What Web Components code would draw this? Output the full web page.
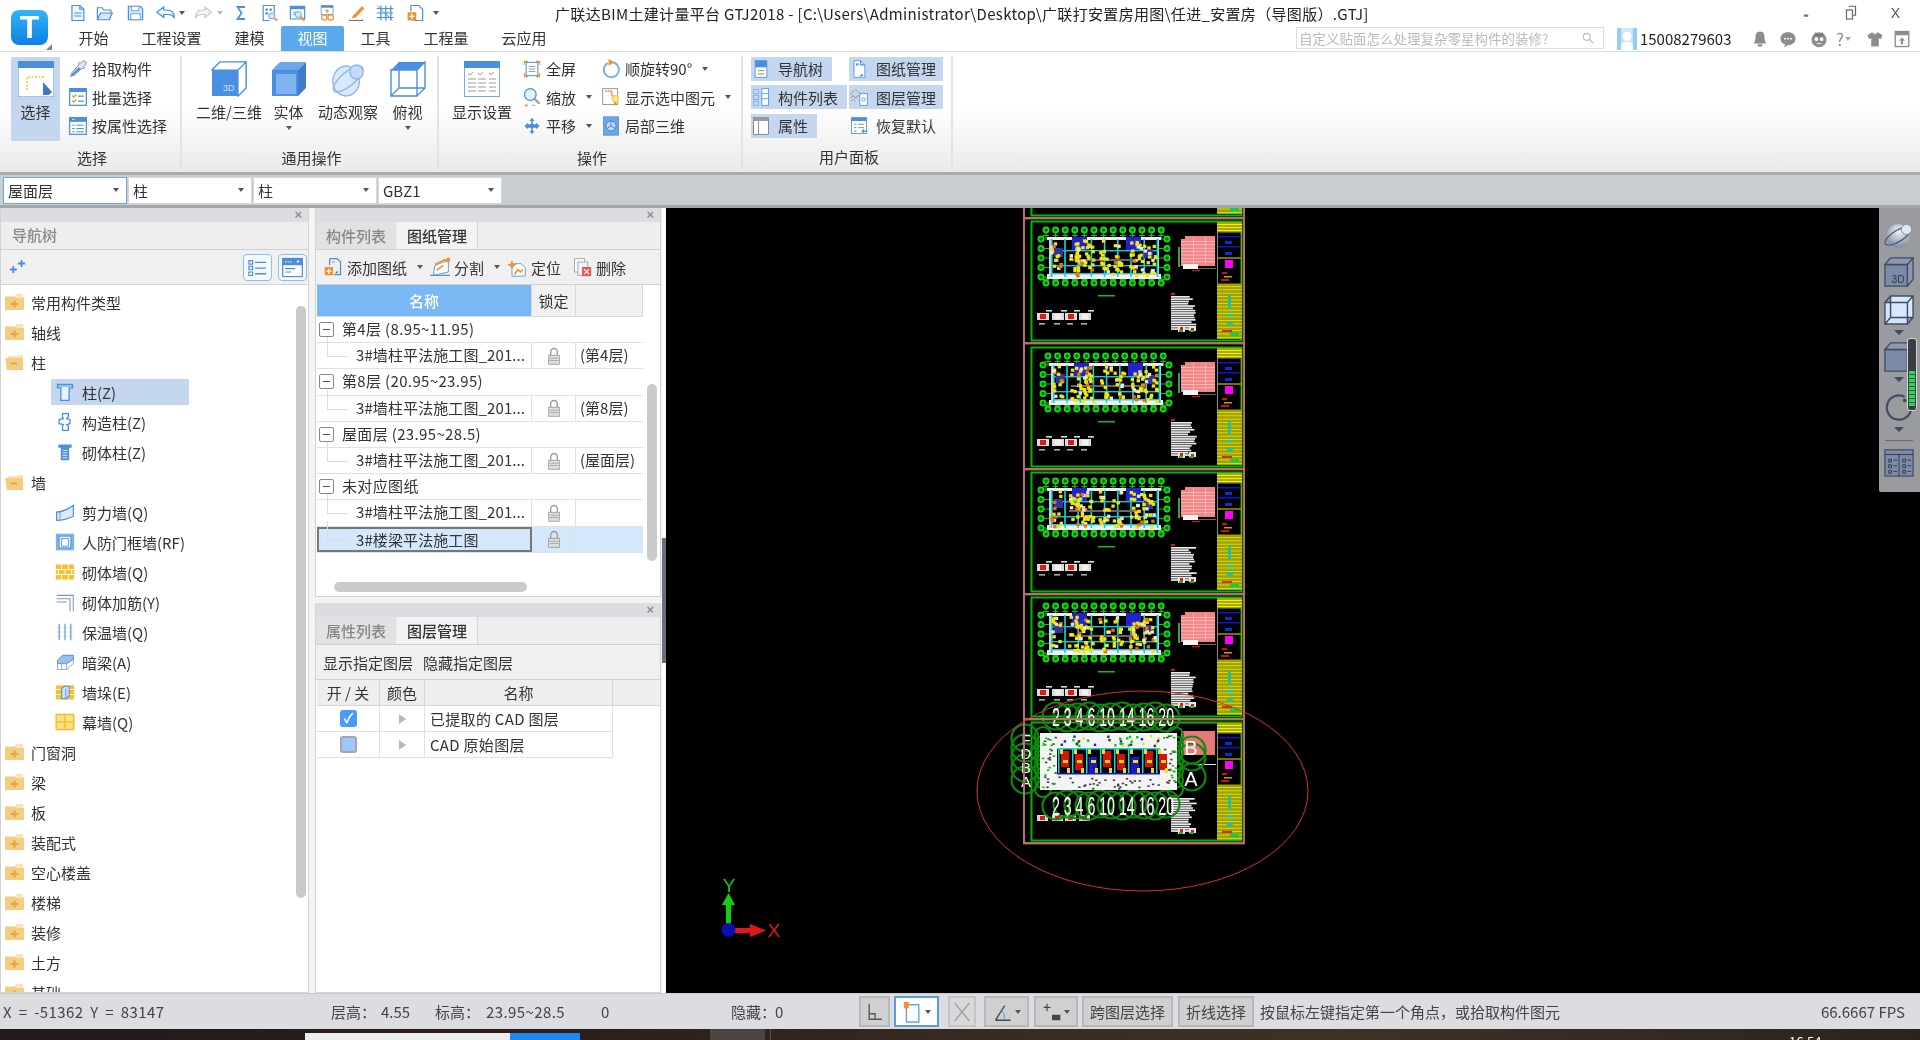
<!DOCTYPE html>
<html lang="zh-CN">
<head>
<meta charset="utf-8">
<title>GTJ2018</title>
<style>
  html, body { margin: 0; height: 100%; overflow: hidden; background: #fff; }
  body { font: 15px "Noto Sans CJK SC", "Liberation Sans", sans-serif; color: #333; }
</style>
</head>
<body>
<gtj-app>
  <title-bar></title-bar>

  <ribbon-bar>
    <ribbon-group label="选择" w="182" pad="11">
      <big-btn icon="select" on w="49">选择</big-btn>
      <btn-stack style="margin-left:8px">
        <small-btn icon="pick">拾取构件</small-btn>
        <small-btn icon="batch">批量选择</small-btn>
        <small-btn icon="byprop">按属性选择</small-btn>
      </btn-stack>
    </ribbon-group>
    <ribbon-group label="通用操作" w="257" pad="17">
      <big-btn icon="box3d">二维/三维</big-btn>
      <big-btn icon="solid" caret>实体</big-btn>
      <big-btn icon="orbit">动态观察</big-btn>
      <big-btn icon="topview" caret>俯视</big-btn>
    </ribbon-group>
    <ribbon-group label="操作" w="304" pad="13">
      <big-btn icon="display">显示设置</big-btn>
      <btn-stack style="margin-left:10px;width:79px">
        <small-btn icon="full">全屏</small-btn>
        <small-btn icon="zoom" caret>缩放</small-btn>
        <small-btn icon="pan" caret>平移</small-btn>
      </btn-stack>
      <btn-stack>
        <small-btn icon="rotate" caret>顺旋转90°</small-btn>
        <small-btn icon="showsel" caret>显示选中图元</small-btn>
        <small-btn icon="local3d">局部三维</small-btn>
      </btn-stack>
    </ribbon-group>
    <ribbon-group label="用户面板" w="210" pad="8" last>
      <btn-stack style="width:98px">
        <small-btn icon="navtree" on w="81" style="gap:7px">导航树</small-btn>
        <small-btn icon="complist" on w="96" style="gap:7px">构件列表</small-btn>
        <small-btn icon="props" on w="66" style="gap:7px">属性</small-btn>
      </btn-stack>
      <btn-stack>
        <small-btn icon="drawing" on w="94" style="gap:7px">图纸管理</small-btn>
        <small-btn icon="layers" on w="94" style="gap:7px">图层管理</small-btn>
        <small-btn icon="restore" w="94" style="gap:7px">恢复默认</small-btn>
      </btn-stack>
    </ribbon-group>
  </ribbon-bar>

  <combo-bar>
    <combo-box focus>屋面层</combo-box>
    <combo-box>柱</combo-box>
    <combo-box>柱</combo-box>
    <combo-box>GBZ1</combo-box>
  </combo-bar>

  <main-area>
    <dock-panel title-text="导航树" slot="left">
      <nav-tools></nav-tools>
      <nav-tree>
        <tree-row kind="closed">常用构件类型</tree-row>
        <tree-row kind="closed">轴线</tree-row>
        <tree-row kind="open">柱</tree-row>
        <tree-row icon="col" selected>柱(Z)</tree-row>
        <tree-row icon="gzz">构造柱(Z)</tree-row>
        <tree-row icon="qtz">砌体柱(Z)</tree-row>
        <tree-row kind="open">墙</tree-row>
        <tree-row icon="shear">剪力墙(Q)</tree-row>
        <tree-row icon="rf">人防门框墙(RF)</tree-row>
        <tree-row icon="brick">砌体墙(Q)</tree-row>
        <tree-row icon="rebar">砌体加筋(Y)</tree-row>
        <tree-row icon="insul">保温墙(Q)</tree-row>
        <tree-row icon="beam">暗梁(A)</tree-row>
        <tree-row icon="pier">墙垛(E)</tree-row>
        <tree-row icon="curtain">幕墙(Q)</tree-row>
        <tree-row kind="closed">门窗洞</tree-row>
        <tree-row kind="closed">梁</tree-row>
        <tree-row kind="closed">板</tree-row>
        <tree-row kind="closed">装配式</tree-row>
        <tree-row kind="closed">空心楼盖</tree-row>
        <tree-row kind="closed">楼梯</tree-row>
        <tree-row kind="closed">装修</tree-row>
        <tree-row kind="closed">土方</tree-row>
        <tree-row kind="closed">基础</tree-row>
      </nav-tree>
    </dock-panel>

    <dock-panel tabs="构件列表,图纸管理" slot="mid1">
      <panel-tools>
        <small-btn icon="addpaper" caret style="gap:4px">添加图纸</small-btn>
        <small-btn icon="split" caret style="margin-left:7px">分割</small-btn>
        <small-btn icon="locate" style="margin-left:7px">定位</small-btn>
        <small-btn icon="del" style="margin-left:11px">删除</small-btn>
      </panel-tools>
      <drawing-list>
        <drawing-row kind="group">第4层 (8.95~11.95)</drawing-row>
        <drawing-row tag="(第4层)">3#墙柱平法施工图_201...</drawing-row>
        <drawing-row kind="group">第8层 (20.95~23.95)</drawing-row>
        <drawing-row tag="(第8层)">3#墙柱平法施工图_201...</drawing-row>
        <drawing-row kind="group">屋面层 (23.95~28.5)</drawing-row>
        <drawing-row tag="(屋面层)">3#墙柱平法施工图_201...</drawing-row>
        <drawing-row kind="group">未对应图纸</drawing-row>
        <drawing-row>3#墙柱平法施工图_201...</drawing-row>
        <drawing-row selected>3#楼梁平法施工图</drawing-row>
      </drawing-list>
    </dock-panel>

    <dock-panel tabs="属性列表,图层管理" slot="mid2">
      <panel-tools>
        <span>显示指定图层</span><span style="margin-left:10px">隐藏指定图层</span>
      </panel-tools>
      <layer-table>
        <layer-row checked>已提取的 CAD 图层</layer-row>
        <layer-row>CAD 原始图层</layer-row>
      </layer-table>
    </dock-panel>

    <cad-canvas slot="canvas"><view-toolbox></view-toolbox></cad-canvas>
  </main-area>

  <status-bar></status-bar>
  <task-bar></task-bar>
</gtj-app>

<script>
const B = '#4a8fdc', L = '#d6e7fb', O = '#f0922c', Y = '#fbc02d';
const line = `fill="none" stroke="${B}" stroke-width="1.5"`;

// viewBox is 24x24 unless the entry starts with its own viewBox
const ICONS = {
  'new': `<path d="M5 2h10l5 5v15H5z" fill="#eef5fd" stroke="${B}" stroke-width="1.5"/><path d="M15 2v5h5M8 12h9M8 16h9" ${line}/>`,
  open: `<path d="M3 21V5h6l2 3h9v4" ${line}/><path d="M3 21l4-9h15l-4 9z" fill="${L}" stroke="${B}" stroke-width="1.5"/>`,
  save: `<path d="M3 3h15l3 3v15H3z" fill="${L}" stroke="${B}" stroke-width="1.5"/><path d="M7 3h9v6H7z" fill="#fff" stroke="${B}"/><path d="M6 13h12v8H6z" fill="#fff" stroke="${B}"/>`,
  undo: `<path d="M10 4L2 11l8 7v-4h5c3 0 5 1 7 4 0-6-3-10-9-10h-3z" fill="#f3f8fe" stroke="${B}" stroke-width="1.5"/>`,
  redo: `<path d="M14 4l8 7-8 7v-4H9c-3 0-5 1-7 4 0-6 3-10 9-10h3z" fill="#f6f6f6" stroke="#c4c8cc" stroke-width="1.5"/>`,
  sigma: `<path d="M19 4H6l7 8-7 8h13" fill="none" stroke="${B}" stroke-width="2.6"/>`,
  qa1: `<path d="M4 2v20h8" ${line}/><path d="M4 2h14v10" ${line}/><path d="M7 6h3v3H7zM12 6h3v3h-3zM7 11h3v3H7z" fill="${B}"/><circle cx="15" cy="16" r="4" fill="${L}" stroke="${B}"/><path d="M18 19l4 3" stroke="${O}" stroke-width="2.5"/>`,
  qa2: `<path d="M3 3h18v17H3z" fill="#fff" stroke="${B}" stroke-width="1.5"/><path d="M3 3h18v4H3z" fill="${B}"/><circle cx="13" cy="14" r="4" fill="${L}" stroke="${B}"/><path d="M16 17l5 5" stroke="${O}" stroke-width="2.5"/><path d="M6 11h4M6 14h3" stroke="${B}"/>`,
  qa3: `<path d="M4 2h15v12H4z" fill="#fff" stroke="${B}"/><path d="M4 2h15v3H4z" fill="${B}"/><path d="M9 9h5M11.5 7v5" stroke="${O}" stroke-width="1.5"/><circle cx="8" cy="18" r="3.5" fill="none" stroke="${O}" stroke-width="1.5"/><circle cx="16" cy="18" r="3.5" fill="none" stroke="${O}" stroke-width="1.5"/>`,
  pen: `<path d="M8 15L19 3l3 3-11 12-5 1z" fill="${O}"/><path d="M3 22h17" stroke="#777" stroke-width="1.5"/><path d="M3 20v2M20 20v2" stroke="#777"/>`,
  gridq: `<path d="M2 6h20M2 12h20M2 18h20M7 2v20M13 2v20M19 2v20" ${line}/><path d="M3 2l18 20" stroke="${B}"/>`,
  addfile: `<path d="M6 2h10l5 5v15H10" ${line}/><path d="M6 2v8" ${line}/><rect x="2" y="11" width="11" height="11" fill="${O}"/><path d="M7.5 13v7M4 16.5h7" stroke="#fff" stroke-width="1.8"/>`,
  search: `<circle cx="10" cy="10" r="6" fill="none" stroke="#bbb" stroke-width="2"/><path d="M14.5 14.5L21 21" stroke="#bbb" stroke-width="2"/>`,
  avatar: `<rect width="24" height="24" fill="#cfe6fb"/><circle cx="12" cy="9" r="5" fill="#fff"/><path d="M3 24c0-7 4-9 9-9s9 2 9 9z" fill="#fff"/><path d="M0 0h5v24H0zM19 0h5v24h-5z" fill="#7cc0f5" opacity=".7"/>`,
  bell: `<path d="M12 2c5 0 6 4 6 8 0 4 1 7 3 8H3c2-1 3-4 3-8 0-4 1-8 6-8z" fill="#8b8d90"/><rect x="9" y="19" width="6" height="3" fill="#8b8d90"/>`,
  chat: `<path d="M12 3c6 0 10 3.5 10 8.5S18 20 12 20l-5 3 1-4c-4-1.5-6-4-6-7.5C2 6.5 6 3 12 3z" fill="#8b8d90"/><circle cx="8" cy="11.5" r="1.3" fill="#fff"/><circle cx="12" cy="11.5" r="1.3" fill="#fff"/><circle cx="16" cy="11.5" r="1.3" fill="#fff"/>`,
  mascot: `<circle cx="12" cy="13" r="10" fill="#8b8d90"/><path d="M7 3l3 3h4l3-3 1 5H6z" fill="#777"/><circle cx="8.5" cy="12" r="2.5" fill="#fff"/><circle cx="15.5" cy="12" r="2.5" fill="#fff"/><path d="M9 18h6" stroke="#ddd" stroke-width="1.5"/>`,
  shirt: `<path d="M8 3L2 7l2 5 3-1v11h10V11l3 1 2-5-6-4-4 3z" fill="#8b8d90"/>`,
  upload: `<rect x="3" y="2" width="18" height="20" fill="#fff" stroke="#8b8d90" stroke-width="1.8"/><rect x="3" y="2" width="18" height="5" fill="#8b8d90"/><path d="M12 10l-4 4h2.5v5h3v-5H16z" fill="#8b8d90"/>`,
  minwin: `<rect x="9" y="14" width="6" height="3" fill="#777"/>`,
  maxwin: `<path d="M9 3h9v12h-3" fill="none" stroke="#666" stroke-width="1.6"/><rect x="6" y="8" width="8" height="12" fill="#fff" stroke="#666" stroke-width="1.6"/>`,

  select: `0 0 36 36|<rect x="0" y="0" width="36" height="36" fill="#fff" stroke="${B}"/><rect width="36" height="7" fill="${B}"/><path d="M9 29V16h17" fill="none" stroke="${Y}" stroke-width="1.5" stroke-dasharray="2 1.5"/><path d="M25 21l9 10-3 3h-6z" fill="#3f78c4"/>`,
  pick: `<path d="M21 3c-1-1-3-1-4 0l-2 2-1-1-2 2 1 1-8 9-2 5 5-2 9-8 1 1 2-2-1-1 2-2c1-1 1-3 0-4z" fill="${L}" stroke="#777"/><path d="M4 19l9-9 2 2-9 8z" fill="${B}"/>`,
  batch: `<rect x="2" y="2" width="20" height="20" fill="#fff" stroke="${B}" stroke-width="1.5"/><rect x="2" y="2" width="20" height="4" fill="${B}"/><path d="M5 10l2 2 3-3M5 16l2 2 3-3" fill="none" stroke="${O}" stroke-width="1.5"/><path d="M12 11h7M12 17h7" stroke="${B}" stroke-width="1.5"/>`,
  byprop: `<rect x="2" y="2" width="20" height="20" fill="#fff" stroke="${B}" stroke-width="1.5"/><rect x="2" y="2" width="20" height="5" fill="${B}"/><path d="M5 4h3" stroke="#fff"/><path d="M5 11h3M5 15h3M5 19h3M10 11h9M10 15h9M10 19h9" stroke="${B}" stroke-width="1.2"/>`,
  box3d: `0 0 36 36|<path d="M9 1h26v26H9zM1 9l8-8M27 9l8-8M27 35l8-8" fill="#fff" stroke="${B}" stroke-width="1.2"/><path d="M1 9l8-8h26l-8 8zM27 9l8-8v26l-8 8z" fill="#fff" stroke="${B}" stroke-width="1.2"/><path d="M1 9h26v26H1z" fill="#4a90e2"/><text x="12" y="30" font-size="9" fill="#d3e6fc" font-family="Liberation Sans">3D</text>`,
  solid: `0 0 36 36|<path d="M1 9l8-8h26l-8 8z" fill="#6ea6e8"/><path d="M27 9l8-8v26l-8 8z" fill="#3e7cc9"/><path d="M1 9h26v26H1z" fill="#4a90e2"/><path d="M5 13h20v20H5z" fill="#80b2ee"/>`,
  orbit: `0 0 38 36|<ellipse cx="17" cy="20" rx="14" ry="15" fill="#d9e8fa" stroke="#8fb8e8" stroke-width="1.5"/><ellipse cx="19" cy="18" rx="19" ry="7" transform="rotate(-38 19 18)" fill="none" stroke="#8fb8e8" stroke-width="1.5"/><circle cx="28" cy="11" r="7" fill="#c4dcf7" stroke="#8fb8e8" stroke-width="1.5"/>`,
  topview: `0 0 36 36|<path d="M1 9l8-8h26l-8 8z" fill="#4a90e2"/><path d="M1 9h26v26H1zM27 9l8-8v26l-8 8M9 1v26h26M1 35l8-8" fill="none" stroke="${B}" stroke-width="1.4"/>`,
  display: `0 0 36 36|<rect x=".5" y=".5" width="35" height="35" fill="#fff" stroke="#78a9e4"/><rect width="36" height="7" fill="${B}"/><path d="M4 12l2 2 3-3M14 12l2 2 3-3M25 12l2 2 3-3" fill="none" stroke="${O}"/><path d="M4 18h8M14 18h8M25 18h7M4 22h8M14 22h8M25 22h7M4 26h8M14 26h8M25 26h7M4 30h8M14 30h8M25 30h7" stroke="#999" stroke-width="1.2"/>`,
  full: `<path d="M3 7V3h4M17 3h4v4M21 17v4h-4M7 21H3v-4" fill="none" stroke="${O}" stroke-width="1.6"/><rect x="5" y="4" width="14" height="16" fill="#fff" stroke="${B}" stroke-width="1.2"/><path d="M8 9h8M8 12h8M8 15h8" stroke="#888"/>`,
  zoom: `<circle cx="10" cy="9" r="7" fill="#e7f1fc" stroke="${B}" stroke-width="1.5"/><path d="M15 14l6 6" stroke="#999" stroke-width="2.5"/><path d="M3 22h4M5 20v4M12 22h4" stroke="${O}" stroke-width="1.2"/>`,
  pan: `<path d="M12 2l3 4h-2v4h4V8l4 4-4 4v-2h-4v4h2l-3 4-3-4h2v-4H7v2l-4-4 4-4v2h4V6H9z" fill="${B}"/>`,
  rotate: `<path d="M14 4a9 9 0 1 1-6 1" fill="none" stroke="#7fb0e8" stroke-width="2.4"/><path d="M9 0l7 4-7 4z" fill="${O}"/>`,
  showsel: `<rect x="2" y="2" width="18" height="19" fill="#fff" stroke="#888"/><path d="M5 5h8v7" fill="none" stroke="${O}" stroke-width="2" stroke-dasharray="2 1"/><circle cx="17" cy="14" r="4" fill="#fde28a" stroke="${Y}"/><rect x="15.5" y="18" width="3" height="4" fill="#d8a51a"/>`,
  local3d: `<rect x="3" y="1" width="18" height="22" fill="#6ea6e8" stroke="${B}"/><circle cx="12" cy="12" r="6" fill="#bcd7f7" stroke="#3f78c4"/><path d="M12 12V6M12 12l-5 3M12 12l5 3" stroke="#3f78c4"/>`,
  navtree: `<rect x="5" y="2" width="14" height="20" fill="#fff" stroke="${B}"/><rect x="5" y="2" width="14" height="8" fill="${B}"/><path d="M8 14h8M8 18h8" stroke="#777"/>`,
  complist: `<path d="M3 3h6v5H3zM3 10h6v5H3zM3 17h6v5H3z" fill="none" stroke="#7ba9dd"/><rect x="13" y="2" width="8" height="20" fill="#fff" stroke="${B}"/><path d="M13 8h8M13 14h8" stroke="${B}"/>`,
  props: `<rect x="3" y="2" width="18" height="20" fill="#fff" stroke="#777"/><rect x="3" y="2" width="18" height="4" fill="#9a9a9a"/><path d="M9 6v16" stroke="#777"/>`,
  drawing: `<path d="M6 2h8l5 5v15H6z" fill="#fff" stroke="${B}"/><path d="M14 2v5h5M9 8V6h3M16 18v2h-3" ${line}/>`,
  layers: `<path d="M2 8l6-5 6 5-6 5zM2 13l3-2 3 2 3-2M2 17l3-2 3 2" fill="none" stroke="#999"/><rect x="13" y="8" width="9" height="14" fill="#fff" stroke="${B}"/><circle cx="17.5" cy="15" r="2" fill="none" stroke="${B}"/>`,
  restore: `<rect x="3" y="2" width="18" height="19" fill="#fff" stroke="${B}"/><rect x="3" y="2" width="18" height="4" fill="${B}"/><path d="M6 10h3M6 14h3M6 18h3M11 10h7M11 14h7" stroke="#777"/><path d="M22 18h-6l2-2M16 18l2 2" fill="none" stroke="${B}" stroke-width="1.5"/>`,

  sparkle: `<path d="M1 14h3.5v-3.500h2.500V14h3.500v2.500H7V20H4.500v-3.500H1z" fill="${B}"/><path d="M12 6h3.500V2.500H18V6h3.500v2.500H18V12h-2.500V8.500H12z" fill="${B}"/>`,
  listbtn: `0 0 22 22|<path d="M4 5h3v3H4zM4 10h3v3H4zM4 15h3v3H4z" fill="none" stroke="${B}" stroke-width="1"/><path d="M9 6.5h9M9 11.5h9M9 16.5h9" stroke="${B}" stroke-width="1.2"/>`,
  viewbtn: `0 0 22 22|<rect x="3" y="3" width="16" height="16" fill="#fff" stroke="${B}"/><rect x="3" y="3" width="16" height="6" fill="${B}"/><path d="M5 6h1M7 6h1M9 6h1" stroke="#fff"/><path d="M14 5h3l-1.5 2z" fill="#fff"/><path d="M5 12h8M5 15h5" stroke="${B}"/>`,
  closed: `0 0 18 16|<path d="M10 0h7v3h-7z" fill="#f8e3b4"/><path d="M0 2.5h10l1 1h7V16H0z" fill="#f2cd82"/><path d="M8 6.5h2V9h2.5v2H10v2.500H8V11H5.500V9H8z" fill="#dfa93f"/>`,
  opened: `0 0 20 16|<path d="M3 2h9l2-1h5v3H3z" fill="#f8e3b4"/><path d="M0 4h19v12H2z" fill="#f2cd82"/><path d="M6 8.5h7v2H6z" fill="#dfa93f"/>`,
  col: `<path d="M3 3h18v4h-4v15H7V7H3z" fill="#e8f2fd" stroke="${B}" stroke-width="1.6"/><path d="M3 5h18" stroke="${B}"/>`,
  gzz: `<path d="M9 2h7v4l-2 2 4 1v5l-4 1 2 2v5H9v-5l1-2-5-1V9l5-1-1-2z" fill="#fff" stroke="${B}" stroke-width="1.6"/>`,
  qtz: `<path d="M4 3h16v4h-3v15H7V7H4z" fill="${B}"/><path d="M9 10h6M9 13h6M9 16h6M9 19h6" stroke="#fff"/>`,
  shear: `<path d="M2 12c6 0 14-4 20-8v13c-6 3-13 5-20 5z" fill="#dceafb" stroke="${B}" stroke-width="1.3"/><path d="M2 12v10M6 12v9M2 12c7 0 14-3 20-8" fill="none" stroke="${B}"/>`,
  rf: `<rect x="1" y="2" width="22" height="20" fill="#7fb0e8"/><rect x="5" y="5" width="14" height="14" fill="#eaf3fd" stroke="#4a8fdc"/><rect x="8" y="8" width="8" height="9" fill="#fff" stroke="${B}"/>`,
  brick: `<rect x="1" y="3" width="22" height="18" fill="${Y}"/><path d="M1 9h22M1 15h22M8 3v6M16 3v6M4 9v6M12 9v6M20 9v6M8 15v6M16 15v6" stroke="#fff" stroke-width="1.2"/>`,
  rebar: `<path d="M2 4h20v19M2 8h16v15M2 12h12" fill="none" stroke="#7d97b8" stroke-width="1.3"/><path d="M22 4v19" stroke="#9ac0ea"/>`,
  insul: `<path d="M5 2v20M12 2v20M19 2v20" stroke="${B}" stroke-width="1.3"/><path d="M3 7h4M3 12h4M3 17h4M10 7h4M10 12h4M10 17h4M17 7h4M17 12h4M17 17h4" stroke="#89b6ea"/>`,
  beam: `<path d="M3 10l6-6h13v10l-8 7H3z" fill="#fff" stroke="#999"/><path d="M3 10l6-6h13v5l-8 5H3z" fill="#9ac1ee" stroke="${B}"/><path d="M8 14v7M14 14v7" stroke="#999"/>`,
  pier: `<rect x="1" y="4" width="22" height="17" fill="${Y}"/><path d="M1 9h22M1 15h22" stroke="#fff"/><path d="M8 8l4-3h5v12l-4 3H8z" fill="#cfe2f9" stroke="${B}" stroke-width="1.3"/><path d="M13 8v12" stroke="${B}"/>`,
  curtain: `<rect x="1.5" y="3" width="21" height="18" fill="#ffe38a" stroke="${Y}" stroke-width="2"/><path d="M1 12h22M12 3v18" stroke="${Y}" stroke-width="2"/>`,

  addpaper: `<path d="M8 2h9l4 4v15h-8" ${line}/><path d="M8 2v8" ${line}/><path d="M11 6h3M17 17v2h-2" stroke="#777"/><rect x="2" y="12" width="10" height="10" fill="${O}"/><path d="M7 14v6M4 17h6" stroke="#fff" stroke-width="1.6"/>`,
  split: `<path d="M4 22l2-12 16-6v14z" fill="#fff" stroke="${B}"/><path d="M6 9l12-6 3 3M8 16l8-6" stroke="${O}" stroke-width="1.8" fill="none"/><path d="M0 22h24" stroke="${B}" stroke-width="1.5"/><path d="M20 1h4v5h-4z" fill="${O}"/>`,
  locate: `<path d="M9 8h8l5 5v10H6V11z" fill="#fff" stroke="${B}"/><path d="M6 4l2 4 4 1-4 2-2 4-2-4-4-2 4-1z" fill="${O}"/><path d="M9 21l4-6 3 3 3-3" fill="none" stroke="${O}" stroke-width="1.8"/>`,
  del: `<path d="M3 2h12v16H3z" fill="#fff" stroke="#999"/><path d="M7 6h12v16H7z" fill="#f4f4f4" stroke="#999"/><rect x="12" y="12" width="11" height="11" fill="#e25b5b"/><path d="M14.5 14.5l6 6M20.5 14.5l-6 6" stroke="#fff" stroke-width="1.4"/>`,
  lock: `<path d="M7 11V7a5 5 0 0 1 10 0v4" fill="none" stroke="#9a9a9a" stroke-width="2"/><rect x="4" y="11" width="16" height="12" fill="#dedede" stroke="#8f8f8f"/><path d="M5 15h14M5 18h14" stroke="#999"/>`,

  ortho: `<path d="M5 3v17h15" fill="none" stroke="#555" stroke-width="1.6"/><path d="M5 14h7v6" fill="none" stroke="#555" stroke-width="1.6"/>`,
  box: `<rect x="4" y="4" width="15" height="19" fill="#fff" stroke="#5b9bdc" stroke-width="1.5"/><rect x="1" y="1" width="6" height="7" fill="${O}"/>`,
  crossx: `<path d="M3 2l18 20M21 2L3 22" stroke="#999" stroke-width="1.4"/>`,
  angle: `<path d="M3 21h18M3 21L14 5" stroke="#444" stroke-width="1.5"/><path d="M10 10a10 10 0 0 1 3 11" fill="none" stroke="${B}"/>`,
  dotplus: `<path d="M6 3v8M2 7h8" stroke="#444" stroke-width="1.4"/><rect x="12" y="15" width="10" height="6" fill="#444"/>`,

  tOrbit: `0 0 32 28|<defs><radialGradient id="sp" cx=".55" cy=".3" r=".8"><stop offset="0" stop-color="#f4f6f9"/><stop offset="1" stop-color="#6f7d94"/></radialGradient></defs><circle cx="15" cy="15" r="12.500" fill="url(#sp)"/><ellipse cx="15" cy="15" rx="16" ry="6" transform="rotate(-32 15 15)" fill="none" stroke="#4c5c75" stroke-width="1.4"/><circle cx="24" cy="8" r="5.500" fill="#e3e8ef" stroke="#7c8aa1"/>`,
  t3d: `0 0 32 32|<path d="M1 8h24v23H1z" fill="#7d8ca6" stroke="#3f4d63" stroke-width="1.4"/><path d="M1 8l6-7h24l-6 7zM25 8l6-7v23l-6 7z" fill="#8c9ab1" stroke="#3f4d63" stroke-width="1.4"/><text x="8" y="28" font-size="11" font-family="Liberation Sans" fill="#2f3a4c">3D</text>`,
  tWire: `0 0 32 32|<path d="M1 8h24v23H1z" fill="#cfe3fb"/><path d="M7 1h24v23H7z" fill="#d7e8fc"/><path d="M1 8h24v23H1zM7 1h24v23H7zM1 8l6-7M25 8l6-7M25 31l6-7M1 31l6-7" fill="none" stroke="#3f4d63" stroke-width="1.5"/>`,
  tSolid: `0 0 32 32|<path d="M1 8h24v23H1z" fill="#7d8ca6" stroke="#3f4d63" stroke-width="1.4"/><path d="M1 8l6-7h24l-6 7zM25 8l6-7v23l-6 7z" fill="#8c9ab1" stroke="#3f4d63" stroke-width="1.4"/>`,
  tRot: `0 0 32 32|<path d="M22 5a13 13 0 1 0 7 11" fill="none" stroke="#3f4d63" stroke-width="2.4"/><circle cx="22" cy="9" r="2" fill="#3f4d63"/>`,
  tTable: `0 0 32 32|<rect x="1" y="3" width="30" height="28" fill="#7d8ca6" stroke="#3f4d63" stroke-width="1.3"/><path d="M1 8h30M16 8v23M5 13h3v3H5zM5 19h3v3H5zM5 25h3v3H5zM20 13h3v3h-3zM20 19h3v3h-3zM20 25h3v3h-3zM10 14h4M10 20h4M10 26h4M25 14h4M25 20h4M25 26h4" fill="none" stroke="#2f3a4c"/>`
};

function iconSvg(name) {
  let src = ICONS[name] || '', vb = '0 0 24 24';
  if (/^[\d .]+\|/.test(src)) [vb, src] = src.split('|');
  return `<svg viewBox="${vb}" width="100%" height="100%" preserveAspectRatio="none" xmlns="http://www.w3.org/2000/svg">${src}</svg>`;
}

// base class: shadow root from the tag's css + markup
function define(tag, css, markup, init) {
  class Comp extends HTMLElement {
    connectedCallback() {
      if (this.shadowRoot) return;
      const root = this.attachShadow({ mode: 'open' });
      const tpl = document.createElement('template');
      tpl.innerHTML = `<style>${css}</style>` + (typeof markup === 'function' ? markup(this) : markup);
      root.appendChild(tpl.content.cloneNode(true));
      if (init) init(this, root);
    }
  }
  customElements.define(tag, Comp);
}

const caret = `<i style="display:inline-block;width:0;height:0;border:3.5px solid transparent;border-top:4.5px solid #555;border-bottom:0"></i>`;

define('g-icon', `:host{display:inline-block;width:20px;height:20px;flex:none;line-height:0}`,
  el => iconSvg(el.getAttribute('name')));

define('gtj-app', `
  :host{display:grid;grid-template-rows:52px 120px 36px 785px 36px 11px;height:1040px;width:1920px;overflow:hidden;filter:blur(.35px)}
`, `<slot></slot>`);

define('title-bar', `
  :host{display:grid;grid-template-columns:62px 1fr;grid-template-rows:26px 25px;border-bottom:1px solid #ddd;background:#fff;white-space:nowrap}
  .logo{grid-row:1/3;position:relative}
  .t{position:absolute;left:11px;top:10px;width:37px;height:35px;border-radius:8px;background:linear-gradient(#35b4f4,#0b7fe6);color:#fff;font:bold 32px/35px "Liberation Sans",sans-serif;text-align:center}
  .grip{position:absolute;left:46px;top:44px;border:3px solid transparent;border-right-color:#888;border-bottom-color:#888}
  .row{display:flex;align-items:center;min-width:0}
  .qa g-icon{width:19px;height:18px}
  .title{position:absolute;left:555px;top:3px;line-height:21px;font-size:15px;color:#222;letter-spacing:.33px}
  .win{margin-left:auto;display:flex;padding-right:2px}
  .win b{width:45px;height:26px;display:flex;align-items:center;justify-content:center;font:14px "Liberation Sans",sans-serif;color:#555}
  .win g-icon{width:18px;height:18px}
  nav{display:flex;align-self:stretch}
  nav span{padding:0 16.5px;line-height:24px}
  nav span.on{background:#5aa9ec;color:#fff;border-radius:2px 2px 0 0}
  .search{margin-left:auto;width:304px;height:20px;border:1px solid #ddd;display:flex;align-items:center;font-size:13.5px;color:#bbb;padding-left:2px;box-sizing:content-box;position:relative;top:-1px}
  .search g-icon{width:14px;height:14px;position:absolute;right:8px;top:3px}
  .tail{display:flex;align-items:center}
  .tail g-icon{width:18px;height:18px}
  .num{width:114px;padding-left:3px;box-sizing:border-box;color:#222}
`, `
  <div class="logo"><div class="t">T</div><div class="grip"></div></div>
  <div class="row qa">
    <g-icon name="new" style="margin-left:6px"></g-icon>
    <g-icon name="open" style="margin-left:8px"></g-icon>
    <g-icon name="save" style="margin-left:12px"></g-icon>
    <g-icon name="undo" style="margin-left:10px;width:21px"></g-icon>
    <span style="margin-left:3px;display:flex">${caret}</span>
    <g-icon name="redo" style="margin-left:9px"></g-icon>
    <span style="margin-left:4px;display:flex;opacity:.4">${caret}</span>
    <g-icon name="sigma" style="margin-left:11px;width:14px"></g-icon>
    <g-icon name="qa1" style="margin-left:12px"></g-icon>
    <g-icon name="qa2" style="margin-left:9px"></g-icon>
    <g-icon name="qa3" style="margin-left:11px"></g-icon>
    <g-icon name="pen" style="margin-left:10px"></g-icon>
    <g-icon name="gridq" style="margin-left:9px;width:20px"></g-icon>
    <g-icon name="addfile" style="margin-left:11px"></g-icon>
    <span style="margin-left:8px;display:flex">${caret}</span>
    <span class="title">广联达BIM土建计量平台 GTJ2018 - [C:\\Users\\Administrator\\Desktop\\广联打安置房用图\\任进_安置房（导图版）.GTJ]</span>
    <div class="win">
      <b><g-icon name="minwin"></g-icon></b><b><g-icon name="maxwin"></g-icon></b><b>X</b>
    </div>
  </div>
  <div class="row">
    <nav><span>开始</span><span>工程设置</span><span>建模</span><span class="on">视图</span><span>工具</span><span>工程量</span><span>云应用</span></nav>
    <div class="search">自定义贴面怎么处理复杂零星构件的装修?<g-icon name="search"></g-icon></div>
    <div class="tail">
      <g-icon name="avatar" style="margin-left:13px;width:20px;height:22px"></g-icon>
      <span class="num">15008279603</span>
      <g-icon name="bell"></g-icon>
      <g-icon name="chat" style="margin-left:10px"></g-icon>
      <g-icon name="mascot" style="margin-left:13px"></g-icon>
      <span style="margin-left:8px;color:#8b8d90;font-size:17px;line-height:20px">?</span>
      <span style="margin-left:1px;display:flex;opacity:.5">${caret}</span>
      <g-icon name="shirt" style="margin-left:15px"></g-icon>
      <g-icon name="upload" style="margin-left:9px;margin-right:9px"></g-icon>
    </div>
  </div>
`);

define('ribbon-bar', `:host{display:flex;background:linear-gradient(#fff 0,#fff 45%,#e9eaea 100%)}`, `<slot></slot>`);

define('ribbon-group', `
  :host{display:flex;flex-direction:column;box-sizing:border-box;border-right:2px solid #e2e3e4;margin:4px 0 2px;flex:none}
  .body{display:flex;height:86px;padding-top:1px}
  .label{text-align:center;height:26px;line-height:26px;margin-top:4px;padding-left:4px}
`, el => `
  <div class="body" style="padding-left:${el.getAttribute('pad')}px"><slot></slot></div>
  <div class="label">${el.getAttribute('label')}</div>
`, el => { el.style.width = el.getAttribute('w') + 'px'; });

define('big-btn', `
  :host{display:flex;flex-direction:column;align-items:center;width:60px;height:84px;white-space:nowrap;position:relative}
  :host([on]){background:#c5d7ee}
  g-icon{width:36px;height:36px;margin-top:4px}
  .tx{line-height:22px;margin-top:4px}
  .c{display:flex;margin-top:3px}
`, el => `
  <g-icon name="${el.getAttribute('icon')}"></g-icon>
  <div class="tx"><slot></slot></div>
  ${el.hasAttribute('caret') ? `<div class="c">${caret}</div>` : ''}
`, el => { if (el.getAttribute('w')) el.style.width = el.getAttribute('w') + 'px'; });

define('btn-stack', `:host{display:grid;grid-template-rows:repeat(3,28.5px);align-items:center;justify-items:start;height:84px;margin-top:-2.5px}`, `<slot></slot>`);

define('small-btn', `
  :host{display:inline-flex;align-items:center;gap:4px;height:24px;white-space:nowrap;box-sizing:border-box}
  :host([on]){background:#c5d7ee}
  g-icon{width:20px;height:20px}
`, el => `
  <g-icon name="${el.getAttribute('icon')}"></g-icon><span><slot></slot></span>
  ${el.hasAttribute('caret') ? caret.replace('<i style="', '<i style="margin-left:6px;') : ''}
`, el => { if (el.getAttribute('w')) el.style.width = el.getAttribute('w') + 'px'; });

define('combo-bar', `
  :host{display:flex;gap:1px;background:#c9ccd0;border-top:3px solid #a9abae;border-bottom:3px solid #a3a6aa;padding:2px 0 0 3px;box-sizing:border-box;align-items:flex-start}
`, `<slot></slot>`);

define('combo-box', `
  :host{display:flex;align-items:center;justify-content:space-between;width:124px;height:27px;background:#fff;box-sizing:border-box;padding:0 7px 1px 4px;border:1px solid #d6d7d9}
  :host([focus]){border-color:#6fa8e6}
`, `<slot></slot>${caret}`);

define('main-area', `
  :host{display:grid;grid-template-columns:310px 352px 4px 1fr;grid-template-rows:389px 390px;row-gap:6px;background:#f4f4f4;position:relative}
  .left{grid-row:1/3;grid-column:1;margin-right:1px;display:block}
  .m1,.m2{grid-column:2;margin:0 1px 0 5px;display:block;min-width:0}
  .m1{grid-row:1}
  .m2{grid-row:2}
  .split{grid-row:1/3;grid-column:3;background:linear-gradient(#fff 0,#fff 330px,#67707b 330px,#67707b 455px,#fff 455px);width:4px}
  .cv{grid-row:1/3;grid-column:4;display:block;min-width:0}
`, `
  <div class="left"><slot name="left"></slot></div>
  <div class="m1"><slot name="mid1"></slot></div>
  <div class="m2"><slot name="mid2"></slot></div>
  <div class="split"></div>
  <div class="cv"><slot name="canvas"></slot></div>
`);

define('dock-panel', `
  :host{display:flex;flex-direction:column;height:100%;background:#fff;border:1px solid #d2d3d5;border-top:0;box-sizing:border-box;overflow:hidden}
  .head{height:14px;background:#dcdde0;display:flex;justify-content:flex-end;align-items:center;padding-right:6px;color:#8b8d90;font:bold 13px/14px "Liberation Sans",sans-serif;flex:none}
  .strip{display:flex;height:28px;background:#eeeeee;border-bottom:1px solid #cfd0d2;flex:none;box-sizing:border-box}
  .tab{width:80px;text-align:center;line-height:27px;background:#e2e2e2;color:#888;font-weight:500}
  .tab.on{background:#f3f3f3;color:#333;margin-left:1px;border-right:1px solid #d6d6d6}
  .solo{padding-left:11px;line-height:25px;color:#8a8a8a;font-weight:500}
`, el => {
  const tabs = el.getAttribute('tabs');
  const strip = tabs
    ? tabs.split(',').map((t, i) => `<div class="tab${i ? ' on' : ''}">${t}</div>`).join('')
    : `<div class="solo">${el.getAttribute('title-text')}</div>`;
  return `<div class="head">×</div><div class="strip">${strip}</div><slot></slot>`;
});

define('panel-tools', `
  :host{display:flex;align-items:center;height:35px;background:#f0f0f0;border-bottom:1px solid #cfd0d2;padding-left:7px;box-sizing:border-box;flex:none;white-space:nowrap}
`, `<slot></slot>`);

define('nav-tools', `
  :host{display:flex;align-items:center;height:35px;background:#f0f0f0;border-bottom:1px solid #d2d3d5;box-sizing:border-box;flex:none}
  .spark{margin-left:8px;width:18px;height:18px}
  .b{width:29px;height:27px;box-sizing:border-box;border:1px solid #8dbdf0;border-radius:4px;background:#f6faff;margin-left:6px}
  .b g-icon{width:100%;height:100%}
  .first{margin-left:auto}
  .end{width:1px}
`, `
  <g-icon class="spark" name="sparkle"></g-icon>
  <div class="b first"><g-icon name="listbtn"></g-icon></div>
  <div class="b"><g-icon name="viewbtn"></g-icon></div>
  <div class="end"></div>
`);

define('nav-tree', `
  :host{display:block;flex:1;min-height:0;overflow:hidden;position:relative;padding-top:2px}
  .bar{position:absolute;left:295px;top:21px;width:10px;height:592px;background:#c9c9c9;border-radius:5px}
`, `<slot></slot><div class="bar"></div>`);

define('tree-row', `
  :host{display:flex;align-items:center;height:30px;white-space:nowrap}
  .folder{width:19px;height:16px;margin:0 7px 0 4px}
  .in{display:flex;align-items:center;margin-left:50px;width:138px;height:26px}
  :host([selected]) .in{background:#c5d7ee}
  .in g-icon{width:20px;height:20px;margin:0 7px 0 4px}
`, el => {
  const kind = el.getAttribute('kind');
  if (kind) return `<g-icon class="folder" name="${kind === 'open' ? 'opened' : 'closed'}"></g-icon><slot></slot>`;
  return `<div class="in"><g-icon name="${el.getAttribute('icon')}"></g-icon><slot></slot></div>`;
});

define('drawing-list', `
  :host{display:block;flex:1;position:relative;min-height:0}
  .hd{display:grid;grid-template-columns:215px 44px 67px;height:32px;text-align:center;line-height:31px;background:#f1f1f1;width:326px;border-bottom:1px solid #d9d9d9;box-sizing:border-box;margin-left:1px}
  .hd div{border-right:1px solid #d8d8d8}
  .hd .a{background:#7ab8f5;color:#fff;font-weight:500}
  .v{position:absolute;left:331px;top:99px;width:10px;height:177px;border-radius:5px;background:#cbcbcb}
  .h{position:absolute;left:18px;top:297px;width:193px;height:10px;border-radius:5px;background:#cbcbcb}
`, `
  <div class="hd"><div class="a">名称</div><div>锁定</div><div></div></div>
  <slot></slot>
  <div class="v"></div><div class="h"></div>
`);

define('drawing-row', `
  :host{display:grid;grid-template-columns:215px 44px 67px;width:326px;height:26.2px;box-sizing:border-box;border-bottom:1px solid #e1e1e1;margin-left:1px;line-height:24px;white-space:nowrap;position:relative}
  :host([selected]){background:#d3e8fc}
  .n{padding-left:39px;border-right:1px solid #e1e1e1;box-sizing:border-box;letter-spacing:.1px}
  :host([selected]) .n{border:2px solid #777;padding-left:37px;line-height:21px}
  .l{display:flex;align-items:center;justify-content:center;border-right:1px solid #e1e1e1}
  .l g-icon{width:16px;height:18px}
  .t{padding-left:4px}
  .g{grid-column:1/4;padding-left:25px;position:relative;letter-spacing:.35px}
  .box{position:absolute;left:2px;top:5px;width:15px;height:15px;box-sizing:border-box;border:1px solid #888;border-radius:2px;background:#fff}
  .box::after{content:"";position:absolute;left:3px;top:6px;width:7px;height:1px;background:#555}
  .e{position:absolute;left:10px;top:-6px;width:20px;height:19px;border-left:1px solid #ddd;border-bottom:1px solid #ddd}
`, el => {
  if (el.getAttribute('kind') === 'group') return `<div class="g"><div class="box"></div><slot></slot></div>`;
  return `<div class="e"></div><div class="n"><slot></slot></div><div class="l"><g-icon name="lock"></g-icon></div><div class="t">${el.getAttribute('tag') || ''}</div>`;
});

define('layer-table', `
  :host{display:block;flex:1}
  .hd{display:grid;grid-template-columns:63px 45px 188px 1fr;height:26px;background:#eeeeee;line-height:25px;text-align:center;border-bottom:1px solid #d6d6d6;box-sizing:border-box;margin-left:1px}
  .hd div{border-right:1px solid #d6d6d6}
  .hd div:last-child{border:0}
`, `<div class="hd"><div>开 / 关</div><div>颜色</div><div>名称</div><div></div></div><slot></slot>`);

define('layer-row', `
  :host{display:grid;grid-template-columns:63px 45px 188px;height:26px;width:296px;box-sizing:border-box;border-bottom:1px solid #e0e0e0;line-height:24px;margin-left:1px;white-space:nowrap}
  div{border-right:1px solid #e0e0e0;display:flex;align-items:center;justify-content:center;box-sizing:border-box}
  .nm{justify-content:flex-start;padding-left:5px;letter-spacing:.3px}
  .cb{width:17px;height:17px;box-sizing:border-box;border-radius:3px;background:#9cc8fb;border:2px solid #a4a6a9}
  .cb.on{background:#4a9bf5;border:0;color:#fff;font:bold 13px/17px "Liberation Sans",sans-serif;text-align:center}
  .tri{width:0;height:0;border-style:solid;border-width:5px 0 5px 7px;border-color:transparent transparent transparent #b8b8b8}
`, el => `
  <div><span class="cb${el.hasAttribute('checked') ? ' on' : ''}">${el.hasAttribute('checked') ? '✓' : ''}</span></div>
  <div><span class="tri"></span></div>
  <div class="nm"><slot></slot></div>
`);

// CAD drawing: coordinates are page pixels, mapped by the viewBox
function cadDrawing() {
  let seed = 7;
  const rnd = () => (seed = (seed * 16807) % 2147483647) / 2147483647;
  const rect = (x, y, w, h, f) => `<rect x="${x}" y="${y}" width="${w}" height="${h}" fill="${f}"/>`;
  const box = (x, y, w, h, s, sw = 1) => `<rect x="${x}" y="${y}" width="${w}" height="${h}" fill="none" stroke="${s}" stroke-width="${sw}"/>`;

  function titleBlock(T) {
    let s = '';
    s += rect(1217, T + 5, 25, 10, '#a8a800');
    for (let i = 0; i < 3; i++) s += rect(1217, T + 7 + i * 3, 25, 1, '#f0f000');
    s += box(1217.5, T + 15, 24, 26, '#9a9a00');
    s += rect(1218, T + 19, 23, 1.5, '#1010e0') + rect(1218, T + 29, 23, 1.5, '#1010e0');
    s += rect(1225, T + 24, 7, 3, '#0a30d0') + rect(1225, T + 35, 7, 3, '#0a30d0');
    s += box(1217.5, T + 41, 24, 26, '#9a9a00');
    s += rect(1225, T + 43, 8, 8, '#ff00ff');
    s += rect(1222, T + 55, 5, 2, '#d01010') + rect(1224, T + 59, 8, 1.5, '#c0a000') + rect(1221, T + 62, 8, 2, '#d01010');
    s += rect(1217, T + 67, 25, 55, '#a0a000');
    for (let i = 0; i < 16; i++) s += rect(1217, T + 69 + i * 3.4, 25, .8, '#e8e800');
    s += rect(1228, T + 78, 3, 14, '#20c0a0') + rect(1226, T + 97, 8, 2, '#00d0d0') + rect(1227, T + 105, 6, 3, '#00c8c8') + rect(1230, T + 116, 9, 3, '#00d060');
    s += rect(1222, T + 113, 10, 2, '#d03020');
    return s;
  }

  function smallPlan(T, dx) {
    let s = '';
    const x0 = 1051 + dx, x1 = 1157 + dx, y0 = T + 22, y1 = T + 60;
    const ring = (x, y) => `<circle cx="${x}" cy="${y}" r="2.6" fill="#0a6a0a" stroke="#12e012" stroke-width="1.7"/>`;
    for (let x = x0 - 5; x <= x1 + 6; x += 9.6) {
      s += ring(x, T + 13) + ring(x, T + 66);
      s += rect(x - .6, T + 15, 1.2, 7, '#10c010') + rect(x - .6, T + 60, 1.2, 5, '#10c010');
      s += rect(x - 3, T + 18, 6, 1, '#10c010') + rect(x - 3, T + 62, 6, 1, '#10c010');
    }
    for (let y = y0; y <= y1 + 1; y += 9.5) {
      s += ring(x0 - 10, y) + ring(x1 + 10, y);
      s += rect(x0 - 8, y - .5, 6, 1, '#10c010') + rect(x1 + 2, y - .5, 6, 1, '#10c010');
    }
    s += rect(x0 - 4, y0 - 2, x1 - x0 + 8, 3, '#eeeeee') + rect(x0 - 4, y1 - 3, x1 - x0 + 8, 5, '#f2f2f2');
    s += rect(x0 - 2, y0, 2, y1 - y0, '#cfcfcf') + rect(x1, y0, 2, y1 - y0, '#cfcfcf');
    for (let x = x0; x <= x1; x += 13.2) s += rect(x, y0, 1.6, y1 - y0, '#10d8e0');
    s += rect(x0, T + 33, x1 - x0, 1.4, '#10c8d8') + rect(x0, T + 48, x1 - x0, 1.4, '#10c8d8') + rect(x0, y1 - 4, x1 - x0, 1.4, '#10c8d8');
    s += rect(x0 + 21, y0 - 2, 15, 13, '#2222d0') + rect(x0 + 75, y0 - 2, 15, 13, '#2222d0');
    s += rect(x0 + 3, T + 31, 9, 9, '#34349e') + rect(x1 - 13, T + 32, 9, 9, '#34349e');
    s += rect(x0 + 18, T + 42, 70, 2, '#666');
    const cols = [x0 + 22, x0 + 29, x0 + 36, x0 + 52, x0 + 65, x0 + 82, x0 + 88, x0 + 4, x1 - 8];
    for (let i = 0; i < 130; i++) {
      const c = rnd() < .75 ? '#f4e410' : (rnd() < .5 ? '#f07010' : '#e8e8e8');
      s += rect(cols[i % 9] + rnd() * 10 - 5, y0 + rnd() * (y1 - y0 - 2), 3.4, 3.2, c);
    }
    return s;
  }

  function notes(T, x) {
    let s = rect(x, T + 76, 4, 2, '#e01010');
    for (let i = 0; i < 15; i++) s += rect(x, T + 79 + i * 2.3, 17 + rnd() * 9, 1.7, '#ededed');
    return s;
  }

  function clusters(T) {
    let s = '';
    [1037, 1052, 1065, 1079].forEach((x, i) => {
      s += rect(x, T + 96, 12, 7, '#dcdcdc') + rect(x + 3, T + 97, 6, 5, i % 2 ? '#f0f0f0' : '#e01818');
      s += rect(x + 9, T + 93, 6, 1.6, '#d8d8d8') + rect(x + 2, T + 106, 6, 1.6, '#aaa');
    });
    return s;
  }

  function miniDetails(T, x) {
    return rect(x, T + 109, 7, 6, '#e8e8e8') + rect(x + 2, T + 110, 3, 3, '#e01818') + rect(x + 1, T + 113, 4, 2, '#10c010')
      + rect(x + 11, T + 109, 7, 5, '#e8e8e8') + rect(x + 13, T + 111, 3, 3, '#e01818') + rect(x + 12, T + 113, 4, 2, '#10c010');
  }

  function redTable(T) {
    let s = rect(1181, T + 22, 34, 27, '#f28686') + rect(1185, T + 19, 30, 4, '#f28686');
    for (let i = 0; i < 7; i++) s += rect(1181, T + 24 + i * 3.4, 34, .8, '#ffc4c4');
    s += rect(1193, T + 20, .8, 28, '#ffb8b8') + rect(1205, T + 20, .8, 28, '#ffb8b8');
    s += rect(1183, T + 47, 15, 5, '#f4f4f4') + rect(1178, T + 30, 2, 20, '#40a040') + rect(1198, T + 51, 18, 1, '#666') + rect(1192, T + 53, 8, 1.2, '#e01010');
    return s;
  }

  function sheet(T, dx) {
    return box(1031.5, T + 4.5, 210, 119, '#00b800', 2)
      + titleBlock(T) + smallPlan(T, dx) + redTable(T) + notes(T, 1171)
      + miniDetails(T, 1178) + clusters(T)
      + rect(1098, T + 78, 17, 1.5, '#10c010');
  }

  let out = '';
  [92, 217, 343, 468, 593].forEach((T, i) => { out += sheet(T, i === 2 ? 2 : 0); });

  // last sheet: the dense plan that has just been pasted, with its large axis labels
  const T = 719;
  out += box(1031.5, 722.5, 210, 118, '#00b800', 2) + titleBlock(T - 1) + notes(T, 1171) + miniDetails(T, 1178);
  [1037, 1052, 1065, 1079].forEach(x => {
    out += rect(x, 815, 11, 6, '#d8d8d8') + rect(x + 3, 816, 5, 4, '#e01818');
  });
  out += rect(1181, 731, 34, 24, '#e87878') + rect(1196, 764, 20, 1, '#e8e8e8');
  const circle = (x, y, r) => `<circle cx="${x}" cy="${y}" r="${r}" fill="none" stroke="#0d8a0d" stroke-width="2.2"/>`;
  for (let x = 1056; x <= 1172; x += 11) out += circle(x, 716 + (Math.round(x) % 3), 13.5) + circle(x, 806 - (Math.round(x) % 3), 13.5);
  [738, 748, 757, 768, 780].forEach(y => { out += circle(1025, y, 13.5); });
  [750, 757, 777].forEach(y => { out += circle(1192, y, 13.5); });
  for (let y = 735; y < 790; y += 9) { out += circle(1043, y, 8) + circle(1175, y, 8); }
  out += rect(1040, 733, 137, 15, '#f4f4f4') + rect(1040, 774, 137, 16, '#f4f4f4') + rect(1040, 733, 17, 57, '#f4f4f4') + rect(1160, 733, 17, 57, '#f4f4f4');
  for (let i = 0; i < 32; i++) {
    out += rect(1058 + rnd() * 100, 735 + rnd() * 10, 2.4, 2.4, ['#10c010', '#333', '#10c010', '#f0e010', '#2020d0'][i % 5]);
    out += rect(1058 + rnd() * 100, 776 + rnd() * 12, 2.4, 1.6, '#444');
    out += rect(1041 + rnd() * 14, 735 + rnd() * 52, 2.4, 1.6, i % 2 ? '#10c010' : '#444');
    out += rect(1161 + rnd() * 14, 735 + rnd() * 52, 2.4, 1.6, i % 2 ? '#10c010' : '#444');
  }
  out += rect(1057, 748, 103, 26, '#000');
  for (let i = 0; i < 8; i++) {
    const x = 1058 + i * 14;
    out += rect(x, 749, 1.5, 25, '#10d8e0') + rect(x + 3, 751 + (i % 3) * 3, 8, 16, ['#d81010', '#d81010', '#1818d0', '#d81010', '#d81010', '#1818d0', '#d81010', '#d81010'][i]);
    out += rect(x + 2, 749, 3, 5, '#f0e010') + rect(x + 9, 768, 3, 5, '#f0e010') + rect(x + 5, 760, 5, 3, '#f0e010');
  }
  out += rect(1057, 748, 103, 1.5, '#10d8e0') + rect(1057, 773, 103, 1.5, '#1818d0');
  const row = (y, t) => `<text x="1052" y="${y}" font-size="25" fill="#fff" font-family="Liberation Sans" textLength="122" lengthAdjust="spacingAndGlyphs">${t}</text>`;
  out += row(726, '2 3 4 6 10 14 16 20') + row(815, '2 3 4 6 10 14 16 20');
  const lab = (x, y, t, size) => `<text x="${x}" y="${y}" font-size="${size}" fill="#fff" text-anchor="middle" font-family="Liberation Sans">${t}</text>`;
  [[745, 'F'], [759, 'D'], [773, 'B'], [787, 'A']].forEach(([y, t]) => { out += lab(1026, y, t, 15); });
  [[755, 'B'], [786, 'A']].forEach(([y, t]) => { out += lab(1191, y, t, 20); });

  // outer frame
  out += rect(1023, 207, 2, 637, '#b46e6e') + rect(1243, 207, 2, 637, '#b46e6e');
  [217, 342, 468, 593, 718, 842].forEach(y => { out += rect(1023, y, 222, 2.4, '#b46e6e'); });

  out += `<ellipse cx="1142.5" cy="791" rx="165.5" ry="100" fill="none" stroke="#d83030" stroke-width="1"/>`;

  // axis marker
  out += rect(726, 904, 5, 22, '#10d010') + `<path d="M722 905l6.5-12 6.5 12z" fill="#10d010"/>`;
  out += rect(732, 928, 18, 5, '#e01818') + `<path d="M750 924l16 6.5-16 6.5z" fill="#e01818"/>`;
  out += `<circle cx="728.5" cy="930" r="7" fill="#0a10b0"/>`;
  out += `<text x="729" y="892" font-size="19" fill="#10d010" text-anchor="middle" font-family="Liberation Sans">Y</text>`;
  out += `<text x="774" y="937" font-size="19" fill="#e01818" text-anchor="middle" font-family="Liberation Sans">X</text>`;
  return out;
}

define('cad-canvas', `
  :host{display:block;height:100%;background:#000;position:relative;overflow:hidden}
  svg{display:block;filter:blur(.4px)}
`, () => `
  <svg width="1254" height="785" viewBox="666 208 1254 785" xmlns="http://www.w3.org/2000/svg">${cadDrawing()}</svg>
  <slot></slot>
`);

define('view-toolbox', `
  :host{position:absolute;right:0;top:0;width:41px;height:284px;background:#9a9b9e;border-radius:0 0 0 2px;display:flex;flex-direction:column;align-items:center;padding-left:1px;box-sizing:border-box}
  g-icon{width:30px;height:30px;margin-right:3px}
  .c{margin:5px 3px 7px 0;border:5px solid transparent;border-top:5px solid #3f4d63;border-bottom:0}
  .sep{width:28px;height:1px;background:#6b6d70;margin:1px 3px 6px 0}
  .slide{position:absolute;left:28px;top:130px;width:10px;height:73px;background:#3a3d42;border:1px solid #d8d8d8;border-radius:3px;box-sizing:border-box;overflow:hidden}
  .slide i{position:absolute;left:1px;right:1px;top:32px;height:35px;background:repeating-linear-gradient(#38d060 0 3px,#1c6b34 3px 4px)}
`, `
  <g-icon name="tOrbit" style="margin-top:14px;height:26px"></g-icon>
  <g-icon name="t3d" style="margin-top:9px"></g-icon>
  <g-icon name="tWire" style="margin-top:8px"></g-icon>
  <div class="c"></div>
  <g-icon name="tSolid"></g-icon>
  <div class="c"></div>
  <g-icon name="tRot" style="margin-top:3px"></g-icon>
  <div class="c"></div>
  <div class="sep"></div>
  <g-icon name="tTable"></g-icon>
  <div class="slide"><i></i></div>
`);

define('status-bar', `
  :host{display:flex;align-items:center;background:#dcdde0;white-space:nowrap;color:#444;border-top:1px solid #c9cacc;box-sizing:border-box;position:relative}
  span{flex:none}
  .b{height:31px;box-sizing:border-box;border:2px solid #b6b7b9;background:#cfd0d2;display:flex;align-items:center;justify-content:center;flex:none;gap:2px}
  .b g-icon{width:20px;height:22px}
  .b.w{background:#fff;border-color:#5b9bdc}
  .b.x{background:#d8d9db;border-color:#c4c5c7}
  .b i{flex:none}
`, `
  <span style="margin-left:3px;width:328px;word-spacing:3px;letter-spacing:.4px">X = -51362 Y = 83147</span>
  <span style="width:50px">层高：</span><span style="width:54px">4.55</span>
  <span style="width:51px">标高：</span><span style="width:115px;letter-spacing:.4px">23.95~28.5</span>
  <span style="width:130px">0</span>
  <span style="width:44px">隐藏：</span><span style="width:84px">0</span>
  <div class="b" style="width:31px"><g-icon name="ortho"></g-icon></div>
  <div class="b w" style="width:45px;margin-left:4px"><g-icon name="box"></g-icon>${caret}</div>
  <div class="b x" style="width:28px;margin-left:9px"><g-icon name="crossx"></g-icon></div>
  <div class="b" style="width:45px;margin-left:8px"><g-icon name="angle"></g-icon>${caret}</div>
  <div class="b" style="width:44px;margin-left:5px"><g-icon name="dotplus"></g-icon>${caret}</div>
  <div class="b" style="width:91px;margin-left:4px">跨图层选择</div>
  <div class="b" style="width:76px;margin-left:5px">折线选择</div>
  <span style="margin-left:6px">按鼠标左键指定第一个角点，或拾取构件图元</span>
  <span style="position:absolute;right:15px">66.6667 FPS</span>
`);

define('task-bar', `
  :host{display:block;position:relative;overflow:hidden;background:linear-gradient(90deg,#241a1c,#2a1f1c 30%,#3a2c22 55%,#3d3226 70%,#2c2320)}
  div{position:absolute;top:4px;bottom:0}
  .clock{left:1789px;top:5px;color:#fff;font-size:13px;line-height:16px}
`, `
  <div style="left:305px;width:205px;background:#ececec"></div>
  <div style="left:510px;width:70px;background:#1e88f0"></div>
  <div style="left:710px;width:55px;top:0;background:#4a4543"></div>
  <div style="left:770px;width:1px;top:0;background:#55504c"></div>
  <div class="clock">16:54</div>
`);
</script>
</body>
</html>
